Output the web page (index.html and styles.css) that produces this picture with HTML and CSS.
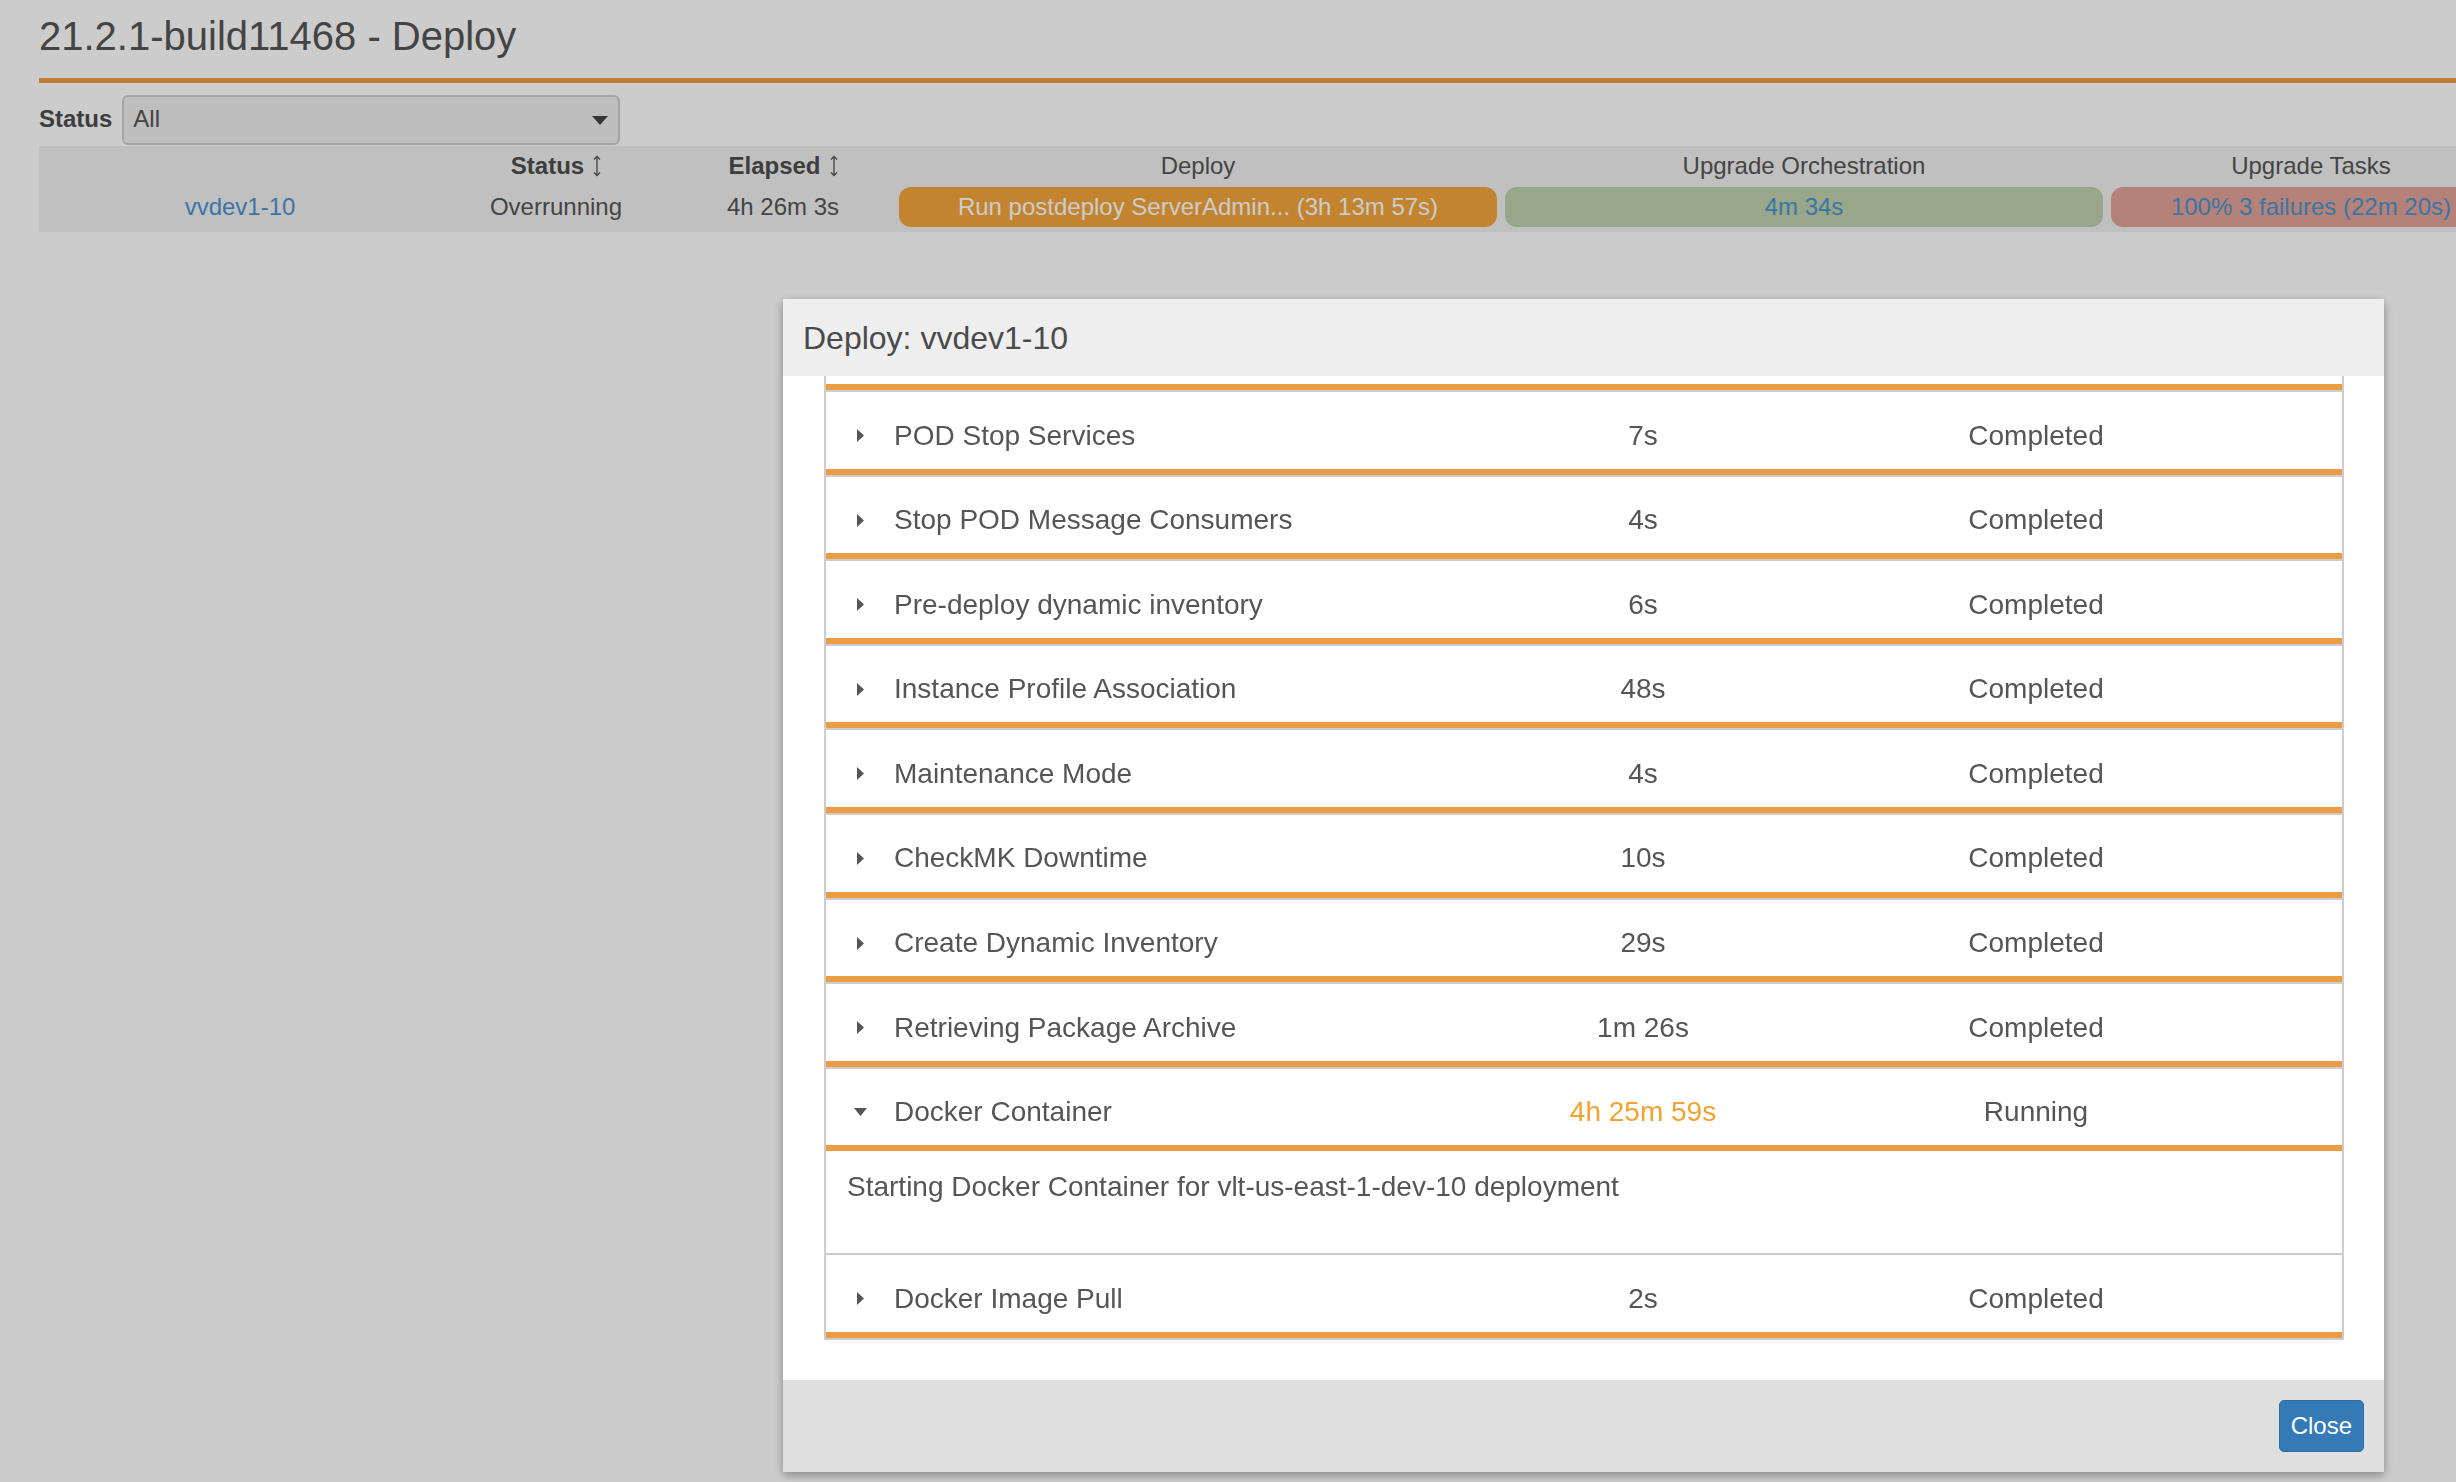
FILE: index.html
```html
<!DOCTYPE html>
<html lang="en">
<head>
<meta charset="utf-8">
<title>21.2.1-build11468 - Deploy</title>
<link rel="stylesheet" href="styles.css">
</head>
<body>
<div class="page">
  <h1 class="page-title">21.2.1-build11468 - Deploy</h1>
  <div class="filter">
    <span class="filter-label">Status</span>
    <div class="select"><span>All</span><span class="select-arrow"></span></div>
  </div>
  <div class="grid-table">
    <div class="grid-row grid-head">
      <div></div>
      <div class="th-sort">Status<svg class="sort-icon" viewBox="0 0 8 22" width="8" height="22"><path d="M4 1.5V20.5M1 4.5L4 1.5L7 4.5M1 17.5L4 20.5L7 17.5" fill="none" stroke="#555" stroke-width="1.3"/></svg></div>
      <div class="th-sort">Elapsed<svg class="sort-icon" viewBox="0 0 8 22" width="8" height="22"><path d="M4 1.5V20.5M1 4.5L4 1.5L7 4.5M1 17.5L4 20.5L7 17.5" fill="none" stroke="#555" stroke-width="1.3"/></svg></div>
      <div>Deploy</div>
      <div>Upgrade Orchestration</div>
      <div>Upgrade Tasks</div>
    </div>
    <div class="grid-row grid-body">
      <div><a class="link" href="#">vvdev1-10</a></div>
      <div>Overrunning</div>
      <div>4h 26m 3s</div>
      <div class="pill pill-deploy">Run postdeploy ServerAdmin... (3h 13m 57s)</div>
      <div class="pill pill-orch"><span class="link">4m 34s</span></div>
      <div class="pill pill-tasks"><span class="link">100% 3 failures (22m 20s)</span></div>
    </div>
  </div>
</div>

<div class="backdrop"></div>

<div class="modal">
  <div class="modal-header"><h4 class="modal-title">Deploy: vvdev1-10</h4></div>
  <div class="modal-body">
    <div class="steps">
      <div class="step-tail"></div>
      <div class="step">
        <div class="step-name"><svg class="caret" viewBox="0 0 7 13"><path d="M0 0L7 6.5L0 13Z"/></svg><span>POD Stop Services</span></div>
        <div class="step-time">7s</div>
        <div class="step-status">Completed</div>
      </div>
      <div class="step">
        <div class="step-name"><svg class="caret" viewBox="0 0 7 13"><path d="M0 0L7 6.5L0 13Z"/></svg><span>Stop POD Message Consumers</span></div>
        <div class="step-time">4s</div>
        <div class="step-status">Completed</div>
      </div>
      <div class="step">
        <div class="step-name"><svg class="caret" viewBox="0 0 7 13"><path d="M0 0L7 6.5L0 13Z"/></svg><span>Pre-deploy dynamic inventory</span></div>
        <div class="step-time">6s</div>
        <div class="step-status">Completed</div>
      </div>
      <div class="step">
        <div class="step-name"><svg class="caret" viewBox="0 0 7 13"><path d="M0 0L7 6.5L0 13Z"/></svg><span>Instance Profile Association</span></div>
        <div class="step-time">48s</div>
        <div class="step-status">Completed</div>
      </div>
      <div class="step">
        <div class="step-name"><svg class="caret" viewBox="0 0 7 13"><path d="M0 0L7 6.5L0 13Z"/></svg><span>Maintenance Mode</span></div>
        <div class="step-time">4s</div>
        <div class="step-status">Completed</div>
      </div>
      <div class="step">
        <div class="step-name"><svg class="caret" viewBox="0 0 7 13"><path d="M0 0L7 6.5L0 13Z"/></svg><span>CheckMK Downtime</span></div>
        <div class="step-time">10s</div>
        <div class="step-status">Completed</div>
      </div>
      <div class="step">
        <div class="step-name"><svg class="caret" viewBox="0 0 7 13"><path d="M0 0L7 6.5L0 13Z"/></svg><span>Create Dynamic Inventory</span></div>
        <div class="step-time">29s</div>
        <div class="step-status">Completed</div>
      </div>
      <div class="step">
        <div class="step-name"><svg class="caret" viewBox="0 0 7 13"><path d="M0 0L7 6.5L0 13Z"/></svg><span>Retrieving Package Archive</span></div>
        <div class="step-time">1m 26s</div>
        <div class="step-status">Completed</div>
      </div>
      <div class="step">
        <div class="step-name"><svg class="caret caret-down" viewBox="0 0 13 8"><path d="M0 0H13L6.5 8Z"/></svg><span>Docker Container</span></div>
        <div class="step-time running">4h 25m 59s</div>
        <div class="step-status">Running</div>
      </div>
      <div class="step-detail">Starting Docker Container for vlt-us-east-1-dev-10 deployment</div>
      <div class="step">
        <div class="step-name"><svg class="caret" viewBox="0 0 7 13"><path d="M0 0L7 6.5L0 13Z"/></svg><span>Docker Image Pull</span></div>
        <div class="step-time">2s</div>
        <div class="step-status">Completed</div>
      </div>
    </div>
  </div>
  <div class="modal-footer"><button class="btn-close" type="button">Close</button></div>
</div>
</body>
</html>
```

FILE: styles.css
```css
* { box-sizing: border-box; }

html, body {
  margin: 0;
  padding: 0;
  width: 2456px;
  height: 1482px;
  overflow: hidden;
}

body {
  background: #fff;
  font-family: "Liberation Sans", Arial, Helvetica, sans-serif;
  color: #555;
}

.page {
  padding-left: 39px;
  width: 2560px;
}

.page-title {
  margin: 0;
  padding: 14px 0 20px;
  font-size: 40px;
  line-height: 44px;
  font-weight: normal;
  color: #555;
  border-bottom: 5px solid #f09c44;
}

.filter {
  display: flex;
  align-items: center;
  margin-top: 12px;
  height: 50px;
}

.filter-label {
  font-size: 24px;
  font-weight: bold;
  color: #4d4d4d;
  margin-right: 10px;
  padding-bottom: 2px;
}

.select {
  display: flex;
  align-items: center;
  width: 498px;
  height: 50px;
  border: 2px solid #cdcdcd;
  border-radius: 6px;
  background: #eee;
  padding: 0 10px 2px 9px;
  font-size: 24px;
  color: #555;
}

.select-arrow {
  margin-left: auto;
  margin-top: 2px;
  width: 0;
  height: 0;
  border-left: 8.5px solid transparent;
  border-right: 8.5px solid transparent;
  border-top: 9px solid #444;
}

.grid-table {
  margin-top: 1px;
  width: 2476px;
  background: #f0f0f0;
  font-size: 24px;
  color: #555;
}

.grid-row {
  display: grid;
  grid-template-columns: 402px 230px 224px 606px 606px 408px;
  align-items: center;
  text-align: center;
  white-space: nowrap;
}

.grid-head { height: 38px; padding-top: 2px; }
.grid-body { height: 48px; padding-bottom: 2px; }

.th-sort {
  font-weight: bold;
  color: #4d4d4d;
  display: flex;
  align-items: center;
  justify-content: center;
}

.sort-icon {
  margin-left: 9px;
  flex: none;
}

.link {
  color: #4a93d0;
  text-decoration: none;
}

.pill {
  margin: 0 4px;
  height: 40px;
  border-radius: 12px;
  display: flex;
  align-items: center;
  justify-content: center;
  overflow: hidden;
}

.pill-deploy { background: #f3a63a; color: #fff; }
.pill-orch { background: #bfd0ad; }
.pill-tasks { background: #e1a398; }

.backdrop {
  position: fixed;
  inset: 0;
  background: rgba(0, 0, 0, 0.2);
}

.modal {
  position: fixed;
  left: 783px;
  top: 299px;
  width: 1601px;
  height: 1173px;
  display: flex;
  flex-direction: column;
  background: #fff;
  box-shadow: 0 3px 9px rgba(0, 0, 0, 0.35);
}

.modal-header {
  flex: none;
  height: 77px;
  background: #eee;
  padding: 0 20px;
  display: flex;
  align-items: center;
}

.modal-title {
  margin: 0;
  font-size: 32px;
  line-height: 40px;
  font-weight: normal;
  color: #4a4a4a;
}

.modal-body {
  flex: 1;
  overflow: hidden;
  padding: 0 40px 0 41px;
}

.steps {
  border: 2px solid #ccc;
  border-top: 0;
}

.step-tail {
  height: 14px;
  border-bottom: 6px solid #ec9c45;
}

.step {
  display: grid;
  grid-template-columns: 614px 406px 380px 1fr;
  border-top: 2px solid #ccc;
  border-bottom: 6px solid #ec9c45;
  padding: 23.5px 0 13.1px;
  line-height: 40px;
  font-size: 28px;
  color: #555;
}

.step-name {
  display: flex;
  align-items: center;
  padding-left: 31px;
}

.caret {
  flex: none;
  width: 7px;
  height: 13px;
  margin-right: 30px;
  fill: #555;
}

.caret-down {
  width: 13px;
  height: 8px;
  margin-left: -3px;
  margin-right: 27px;
}

.step-time, .step-status { text-align: center; }

.step-time.running { color: #f2a230; }

.step-detail {
  padding: 16px 21px 46px;
  font-size: 28px;
  line-height: 40px;
  color: #555;
}

.modal-footer {
  flex: none;
  height: 92px;
  background: #dfdfdf;
  display: flex;
  justify-content: flex-end;
  align-items: center;
  padding-right: 20px;
}

.btn-close {
  height: 52px;
  padding: 0 11px;
  background: #337ab7;
  border: 1px solid #2e6da4;
  border-radius: 5px;
  color: #fff;
  font-size: 24px;
  font-family: "Liberation Sans", Arial, Helvetica, sans-serif;
}
```
